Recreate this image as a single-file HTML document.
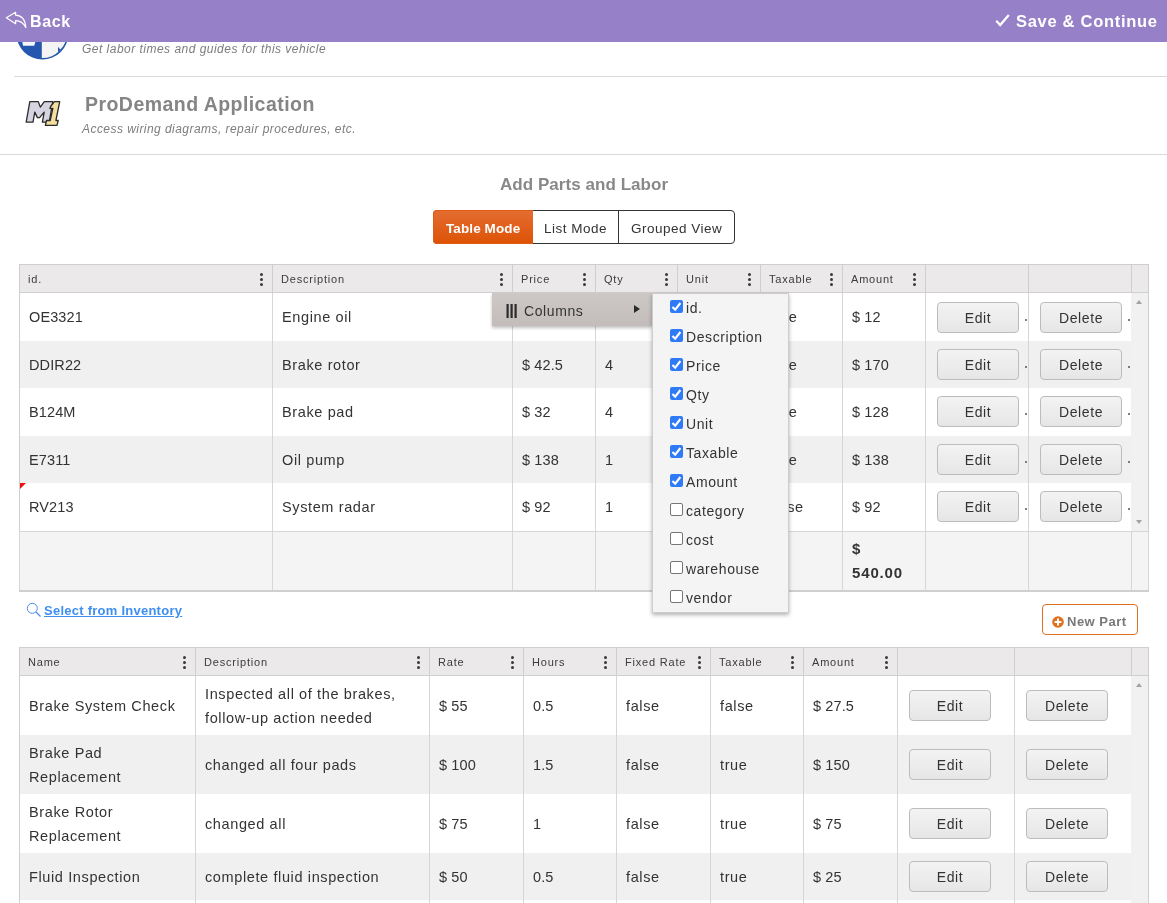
<!DOCTYPE html><html><head><meta charset="utf-8"><title>Parts and Labor</title><style>
*{box-sizing:border-box;margin:0;padding:0}
html,body{width:1167px;height:903px;overflow:hidden;background:#fff;font-family:"Liberation Sans", sans-serif;color:#333}
.a{position:absolute}
.t{position:absolute;white-space:nowrap;will-change:transform}
.hdr{position:absolute;left:0;top:0;width:1167px;height:41.5px;background:#9680c7;z-index:50}
.cell{will-change:transform;position:absolute;display:flex;align-items:center;overflow:hidden;white-space:nowrap}
.hcell{font-size:11px;letter-spacing:0.8px;color:#3c3c3c}
.bcell{font-size:14.5px;letter-spacing:0.7px;color:#333;line-height:24px}
.vl{position:absolute;width:1px;background:#d6d6d6}
.hl{position:absolute;height:1px;background:#d2d2d2}
.dots{position:absolute;width:3px}
.dots i{display:block;width:3px;height:3px;border-radius:50%;background:#3a3a3a;margin-bottom:2.2px}
.btn{will-change:transform;position:absolute;width:82px;height:31px;padding-top:1px;border:1px solid #bcbcbc;border-radius:4px;background:linear-gradient(#f3f3f3,#e6e6e6);font-size:14px;letter-spacing:0.6px;color:#333;display:flex;align-items:center;justify-content:center}
.cb{position:absolute;width:13px;height:13px;border-radius:2px}
.cb.on{background:#2f7bf7}
.cb.off{background:#fff;border:1px solid #767676}
.mi{will-change:transform;position:absolute;font-size:14px;letter-spacing:0.6px;color:#333;white-space:nowrap}
</style></head><body>
<svg class="a" style="left:16px;top:7px" width="53" height="53" viewBox="0 0 53 53">
<defs><clipPath id="gc"><circle cx="26.4" cy="26.6" r="24.4"/></clipPath></defs>
<circle cx="26.4" cy="26.6" r="26" fill="#2457ad"/>
<g clip-path="url(#gc)">
<rect x="25.8" y="0" width="30" height="60" fill="#f4f4f4"/>
<path d="M5.5 30 H21 L18.2 38.8 H7 Z" fill="#f7f7f7"/>
<path d="M42 39.8 L44.2 42.6 L47.5 39 L53 39 L53 60 L42 60 Z" fill="#2457ad"/>
</g>
</svg>
<div class="t" style="left:82px;top:42px;font-size:12px;font-style:italic;color:#7d7d7d;letter-spacing:0.48px">Get labor times and guides for this vehicle</div>
<div class="a" style="left:14px;top:76px;width:1153px;height:1px;background:#d9d9d9"></div>
<svg class="a" style="left:22px;top:96px" width="42" height="34" viewBox="0 0 42 34">
<path d="M4.2 26.2 L7.8 5.6 L16.3 5.6 L18.3 11.1 L22.3 5.6 L30.8 5.6 L27.2 26.2 L20.4 26.2 L22.2 16.1 L17.6 21.6 L15.4 21.6 L12.8 16.1 L11.0 26.2 Z" fill="#d6d4e0" stroke="#2b2b2b" stroke-width="1.3" stroke-linejoin="round"/>
<path d="M28.6 10.5 L32.4 5.6 L37.7 5.6 L33.9 24.5 L36.2 24.5 L35 29.4 L23.4 29.4 L24.5 24.5 L28.2 24.5 L30.9 12.4 L27.9 12.4 Z" fill="#f4df9e" stroke="#2b2b2b" stroke-width="1.3" stroke-linejoin="round"/>
</svg>
<div class="t" style="left:85px;top:92.5px;font-size:19.5px;font-weight:bold;color:#858585;letter-spacing:0.45px">ProDemand Application</div>
<div class="t" style="left:82px;top:122px;font-size:12px;font-style:italic;color:#7d7d7d;letter-spacing:0.45px">Access wiring diagrams, repair procedures, etc.</div>
<div class="a" style="left:0;top:154px;width:1167px;height:1px;background:#d9d9d9"></div>
<div class="t" style="left:500px;top:175px;font-size:17px;font-weight:bold;color:#888;letter-spacing:0.05px">Add Parts and Labor</div>
<div class="a" style="left:433px;top:210px;width:302px;height:34px;border:1px solid #333;border-radius:4px;background:#fff"></div>
<div class="a" style="left:433px;top:210px;width:100px;height:34px;border-radius:4px 0 0 4px;z-index:2;border:1px solid #e15a12;border-right:0;background:linear-gradient(#e46c31,#dd5306);"></div>
<div class="a" style="left:618px;top:210px;width:1px;height:34px;background:#333"></div>
<div class="t" style="left:446px;top:221px;font-size:13.5px;font-weight:bold;color:#fff;letter-spacing:0.1px;z-index:3">Table Mode</div>
<div class="t" style="left:544px;top:221px;font-size:13.5px;color:#333;letter-spacing:0.5px">List Mode</div>
<div class="t" style="left:631px;top:221px;font-size:13.5px;color:#333;letter-spacing:0.5px">Grouped View</div>
<div class="a" style="left:19px;top:264px;width:1130px;height:29px;background:#ebe9ea;border:1px solid #cfcfcf"></div>
<div class="vl" style="left:272px;top:264px;height:29px;background:#cfcfcf"></div>
<div class="vl" style="left:512px;top:264px;height:29px;background:#cfcfcf"></div>
<div class="vl" style="left:595px;top:264px;height:29px;background:#cfcfcf"></div>
<div class="vl" style="left:677px;top:264px;height:29px;background:#cfcfcf"></div>
<div class="vl" style="left:760px;top:264px;height:29px;background:#cfcfcf"></div>
<div class="vl" style="left:842px;top:264px;height:29px;background:#cfcfcf"></div>
<div class="vl" style="left:925px;top:264px;height:29px;background:#cfcfcf"></div>
<div class="vl" style="left:1028px;top:264px;height:29px;background:#cfcfcf"></div>
<div class="vl" style="left:1131px;top:264px;height:29px;background:#cfcfcf"></div>
<div class="cell hcell" style="left:27.5px;top:265px;width:229px;height:27px">id.</div>
<div class="dots" style="left:259.7px;top:273px"><i></i><i></i><i></i></div>
<div class="cell hcell" style="left:280.5px;top:265px;width:216px;height:27px">Description</div>
<div class="dots" style="left:499.7px;top:273px"><i></i><i></i><i></i></div>
<div class="cell hcell" style="left:520.5px;top:265px;width:59px;height:27px">Price</div>
<div class="dots" style="left:582.7px;top:273px"><i></i><i></i><i></i></div>
<div class="cell hcell" style="left:603.5px;top:265px;width:58px;height:27px">Qty</div>
<div class="dots" style="left:664.7px;top:273px"><i></i><i></i><i></i></div>
<div class="cell hcell" style="left:685.5px;top:265px;width:59px;height:27px">Unit</div>
<div class="dots" style="left:747.7px;top:273px"><i></i><i></i><i></i></div>
<div class="cell hcell" style="left:768.5px;top:265px;width:58px;height:27px">Taxable</div>
<div class="dots" style="left:829.7px;top:273px"><i></i><i></i><i></i></div>
<div class="cell hcell" style="left:850.5px;top:265px;width:59px;height:27px">Amount</div>
<div class="dots" style="left:912.7px;top:273px"><i></i><i></i><i></i></div>
<div class="a" style="left:20px;top:293px;width:1111px;height:48px;background:#fff"></div>
<div class="a" style="left:20px;top:341px;width:1111px;height:47px;background:#f0f0f0"></div>
<div class="a" style="left:20px;top:388px;width:1111px;height:48px;background:#fff"></div>
<div class="a" style="left:20px;top:436px;width:1111px;height:47px;background:#f0f0f0"></div>
<div class="a" style="left:20px;top:483px;width:1111px;height:48px;background:#fff"></div>
<div class="a" style="left:1131px;top:293px;width:17px;height:238px;background:#f1f1f1"></div>
<div class="vl" style="left:19px;top:293px;height:298px;background:#cfcfcf"></div>
<div class="vl" style="left:1148px;top:293px;height:298px;background:#cfcfcf"></div>
<div class="vl" style="left:272px;top:293px;height:298px"></div>
<div class="vl" style="left:512px;top:293px;height:298px"></div>
<div class="vl" style="left:595px;top:293px;height:298px"></div>
<div class="vl" style="left:677px;top:293px;height:298px"></div>
<div class="vl" style="left:760px;top:293px;height:298px"></div>
<div class="vl" style="left:842px;top:293px;height:298px"></div>
<div class="vl" style="left:925px;top:293px;height:298px"></div>
<div class="vl" style="left:1028px;top:293px;height:298px"></div>
<div class="a" style="left:1136px;top:300px;width:0;height:0;border-left:3.5px solid transparent;border-right:3.5px solid transparent;border-bottom:4px solid #a3a3a3"></div>
<div class="cell bcell" style="left:29px;top:293px;width:241px;height:48px;white-space:normal;letter-spacing:0.12px">OE3321</div>
<div class="cell bcell" style="left:282px;top:293px;width:228px;height:48px;white-space:normal;letter-spacing:0.62px">Engine oil</div>
<div class="cell bcell" style="left:522px;top:293px;width:71px;height:48px;white-space:normal;letter-spacing:0.12px">$ 12</div>
<div class="cell bcell" style="left:605px;top:293px;width:70px;height:48px;white-space:normal;letter-spacing:0.12px">1</div>
<div class="cell bcell" style="left:687px;top:293px;width:71px;height:48px;white-space:normal;letter-spacing:0.62px">qt</div>
<div class="cell bcell" style="left:770px;top:293px;width:70px;height:48px;white-space:normal;letter-spacing:0.62px">true</div>
<div class="cell bcell" style="left:852px;top:293px;width:71px;height:48px;white-space:normal;letter-spacing:0.12px">$ 12</div>
<div class="btn" style="left:937px;top:302px">Edit</div>
<div class="a" style="left:1024.5px;top:319px;width:2px;height:2px;border-radius:1px;background:#555"></div>
<div class="btn" style="left:1040px;top:302px">Delete</div>
<div class="a" style="left:1127.5px;top:319px;width:2px;height:2px;border-radius:1px;background:#555"></div>
<div class="cell bcell" style="left:29px;top:341px;width:241px;height:47px;white-space:normal;letter-spacing:0.12px">DDIR22</div>
<div class="cell bcell" style="left:282px;top:341px;width:228px;height:47px;white-space:normal;letter-spacing:0.62px">Brake rotor</div>
<div class="cell bcell" style="left:522px;top:341px;width:71px;height:47px;white-space:normal;letter-spacing:0.12px">$ 42.5</div>
<div class="cell bcell" style="left:605px;top:341px;width:70px;height:47px;white-space:normal;letter-spacing:0.12px">4</div>
<div class="cell bcell" style="left:687px;top:341px;width:71px;height:47px;white-space:normal;letter-spacing:0.62px">ea</div>
<div class="cell bcell" style="left:770px;top:341px;width:70px;height:47px;white-space:normal;letter-spacing:0.62px">true</div>
<div class="cell bcell" style="left:852px;top:341px;width:71px;height:47px;white-space:normal;letter-spacing:0.12px">$ 170</div>
<div class="btn" style="left:937px;top:349px">Edit</div>
<div class="a" style="left:1024.5px;top:366px;width:2px;height:2px;border-radius:1px;background:#555"></div>
<div class="btn" style="left:1040px;top:349px">Delete</div>
<div class="a" style="left:1127.5px;top:366px;width:2px;height:2px;border-radius:1px;background:#555"></div>
<div class="cell bcell" style="left:29px;top:388px;width:241px;height:48px;white-space:normal;letter-spacing:0.12px">B124M</div>
<div class="cell bcell" style="left:282px;top:388px;width:228px;height:48px;white-space:normal;letter-spacing:0.62px">Brake pad</div>
<div class="cell bcell" style="left:522px;top:388px;width:71px;height:48px;white-space:normal;letter-spacing:0.12px">$ 32</div>
<div class="cell bcell" style="left:605px;top:388px;width:70px;height:48px;white-space:normal;letter-spacing:0.12px">4</div>
<div class="cell bcell" style="left:687px;top:388px;width:71px;height:48px;white-space:normal;letter-spacing:0.62px">ea</div>
<div class="cell bcell" style="left:770px;top:388px;width:70px;height:48px;white-space:normal;letter-spacing:0.62px">true</div>
<div class="cell bcell" style="left:852px;top:388px;width:71px;height:48px;white-space:normal;letter-spacing:0.12px">$ 128</div>
<div class="btn" style="left:937px;top:396px">Edit</div>
<div class="a" style="left:1024.5px;top:413px;width:2px;height:2px;border-radius:1px;background:#555"></div>
<div class="btn" style="left:1040px;top:396px">Delete</div>
<div class="a" style="left:1127.5px;top:413px;width:2px;height:2px;border-radius:1px;background:#555"></div>
<div class="cell bcell" style="left:29px;top:436px;width:241px;height:47px;white-space:normal;letter-spacing:0.12px">E7311</div>
<div class="cell bcell" style="left:282px;top:436px;width:228px;height:47px;white-space:normal;letter-spacing:0.62px">Oil pump</div>
<div class="cell bcell" style="left:522px;top:436px;width:71px;height:47px;white-space:normal;letter-spacing:0.12px">$ 138</div>
<div class="cell bcell" style="left:605px;top:436px;width:70px;height:47px;white-space:normal;letter-spacing:0.12px">1</div>
<div class="cell bcell" style="left:687px;top:436px;width:71px;height:47px;white-space:normal;letter-spacing:0.62px">ea</div>
<div class="cell bcell" style="left:770px;top:436px;width:70px;height:47px;white-space:normal;letter-spacing:0.62px">true</div>
<div class="cell bcell" style="left:852px;top:436px;width:71px;height:47px;white-space:normal;letter-spacing:0.12px">$ 138</div>
<div class="btn" style="left:937px;top:444px">Edit</div>
<div class="a" style="left:1024.5px;top:461px;width:2px;height:2px;border-radius:1px;background:#555"></div>
<div class="btn" style="left:1040px;top:444px">Delete</div>
<div class="a" style="left:1127.5px;top:461px;width:2px;height:2px;border-radius:1px;background:#555"></div>
<div class="cell bcell" style="left:29px;top:483px;width:241px;height:48px;white-space:normal;letter-spacing:0.12px">RV213</div>
<div class="cell bcell" style="left:282px;top:483px;width:228px;height:48px;white-space:normal;letter-spacing:0.62px">System radar</div>
<div class="cell bcell" style="left:522px;top:483px;width:71px;height:48px;white-space:normal;letter-spacing:0.12px">$ 92</div>
<div class="cell bcell" style="left:605px;top:483px;width:70px;height:48px;white-space:normal;letter-spacing:0.12px">1</div>
<div class="cell bcell" style="left:687px;top:483px;width:71px;height:48px;white-space:normal;letter-spacing:0.62px">ea</div>
<div class="cell bcell" style="left:770px;top:483px;width:70px;height:48px;white-space:normal;letter-spacing:0.62px">false</div>
<div class="cell bcell" style="left:852px;top:483px;width:71px;height:48px;white-space:normal;letter-spacing:0.12px">$ 92</div>
<div class="btn" style="left:937px;top:491px">Edit</div>
<div class="a" style="left:1024.5px;top:508px;width:2px;height:2px;border-radius:1px;background:#555"></div>
<div class="btn" style="left:1040px;top:491px">Delete</div>
<div class="a" style="left:1127.5px;top:508px;width:2px;height:2px;border-radius:1px;background:#555"></div>
<div class="a" style="left:20px;top:531px;width:1128px;height:60px;background:#f4f4f4"></div>
<div class="a" style="left:19px;top:531px;width:1130px;height:1px;background:#d6d6d6"></div>
<div class="vl" style="left:19px;top:531px;height:60px;background:#d6d6d6"></div>
<div class="vl" style="left:272px;top:531px;height:60px;background:#d6d6d6"></div>
<div class="vl" style="left:512px;top:531px;height:60px;background:#d6d6d6"></div>
<div class="vl" style="left:595px;top:531px;height:60px;background:#d6d6d6"></div>
<div class="vl" style="left:677px;top:531px;height:60px;background:#d6d6d6"></div>
<div class="vl" style="left:760px;top:531px;height:60px;background:#d6d6d6"></div>
<div class="vl" style="left:842px;top:531px;height:60px;background:#d6d6d6"></div>
<div class="vl" style="left:925px;top:531px;height:60px;background:#d6d6d6"></div>
<div class="vl" style="left:1028px;top:531px;height:60px;background:#d6d6d6"></div>
<div class="vl" style="left:1131px;top:531px;height:60px;background:#d6d6d6"></div>
<div class="vl" style="left:1148px;top:531px;height:60px;background:#d6d6d6"></div>
<div class="a" style="left:19px;top:590px;width:1130px;height:2px;background:#cfcfcf"></div>
<div class="t" style="left:852px;top:537px;font-size:15px;font-weight:bold;line-height:24px;color:#333;letter-spacing:0.85px">$<br>540.00</div>
<div class="a" style="left:1136px;top:520px;width:0;height:0;border-left:3.5px solid transparent;border-right:3.5px solid transparent;border-top:4px solid #a3a3a3"></div>
<div class="a" style="left:20px;top:483px;width:0;height:0;border-top:6px solid #e11;border-right:6px solid transparent"></div>
<svg class="a" style="left:26px;top:602px" width="16" height="16" viewBox="0 0 16 16"><circle cx="6.3" cy="6.3" r="5" fill="none" stroke="#4a90e8" stroke-width="1"/><path d="M10 10 L14.5 14.5" stroke="#4a90e8" stroke-width="1.2"/></svg>
<div class="t" style="left:44px;top:603px;font-size:13px;font-weight:bold;color:#3f8ff0;letter-spacing:0.25px;text-decoration:underline">Select from Inventory</div>
<div class="a" style="left:1042px;top:604px;width:96px;height:31px;border:1px solid #e0701e;border-radius:4px;background:#fff"></div>
<svg class="a" style="left:1051.5px;top:615.5px" width="12" height="12" viewBox="0 0 12 12"><circle cx="6" cy="6" r="5.8" fill="#e0701e"/><path d="M6 2.6 V9.4 M2.6 6 H9.4" stroke="#fff" stroke-width="2"/></svg>
<div class="t" style="left:1067px;top:614px;font-size:13px;font-weight:bold;color:#787878;letter-spacing:0.5px">New Part</div>
<div class="a" style="left:19px;top:647px;width:1130px;height:29px;background:#ebe9ea;border:1px solid #cfcfcf"></div>
<div class="vl" style="left:195px;top:647px;height:29px;background:#cfcfcf"></div>
<div class="vl" style="left:429px;top:647px;height:29px;background:#cfcfcf"></div>
<div class="vl" style="left:523px;top:647px;height:29px;background:#cfcfcf"></div>
<div class="vl" style="left:616px;top:647px;height:29px;background:#cfcfcf"></div>
<div class="vl" style="left:710px;top:647px;height:29px;background:#cfcfcf"></div>
<div class="vl" style="left:803px;top:647px;height:29px;background:#cfcfcf"></div>
<div class="vl" style="left:897px;top:647px;height:29px;background:#cfcfcf"></div>
<div class="vl" style="left:1014px;top:647px;height:29px;background:#cfcfcf"></div>
<div class="vl" style="left:1131px;top:647px;height:29px;background:#cfcfcf"></div>
<div class="cell hcell" style="left:27.5px;top:648px;width:152px;height:27px">Name</div>
<div class="dots" style="left:182.7px;top:656px"><i></i><i></i><i></i></div>
<div class="cell hcell" style="left:203.5px;top:648px;width:210px;height:27px">Description</div>
<div class="dots" style="left:416.7px;top:656px"><i></i><i></i><i></i></div>
<div class="cell hcell" style="left:437.5px;top:648px;width:70px;height:27px">Rate</div>
<div class="dots" style="left:510.7px;top:656px"><i></i><i></i><i></i></div>
<div class="cell hcell" style="left:531.5px;top:648px;width:69px;height:27px">Hours</div>
<div class="dots" style="left:603.7px;top:656px"><i></i><i></i><i></i></div>
<div class="cell hcell" style="left:624.5px;top:648px;width:70px;height:27px">Fixed Rate</div>
<div class="dots" style="left:697.7px;top:656px"><i></i><i></i><i></i></div>
<div class="cell hcell" style="left:718.5px;top:648px;width:69px;height:27px">Taxable</div>
<div class="dots" style="left:790.7px;top:656px"><i></i><i></i><i></i></div>
<div class="cell hcell" style="left:811.5px;top:648px;width:70px;height:27px">Amount</div>
<div class="dots" style="left:884.7px;top:656px"><i></i><i></i><i></i></div>
<div class="a" style="left:20px;top:676px;width:1111px;height:59px;background:#fff"></div>
<div class="a" style="left:20px;top:735px;width:1111px;height:59px;background:#f0f0f0"></div>
<div class="a" style="left:20px;top:794px;width:1111px;height:59px;background:#fff"></div>
<div class="a" style="left:20px;top:853px;width:1111px;height:47px;background:#f0f0f0"></div>
<div class="a" style="left:20px;top:900px;width:1111px;height:47px;background:#fff"></div>
<div class="a" style="left:1131px;top:676px;width:17px;height:271px;background:#f1f1f1"></div>
<div class="vl" style="left:19px;top:676px;height:271px;background:#cfcfcf"></div>
<div class="vl" style="left:1148px;top:676px;height:271px;background:#cfcfcf"></div>
<div class="vl" style="left:195px;top:676px;height:271px"></div>
<div class="vl" style="left:429px;top:676px;height:271px"></div>
<div class="vl" style="left:523px;top:676px;height:271px"></div>
<div class="vl" style="left:616px;top:676px;height:271px"></div>
<div class="vl" style="left:710px;top:676px;height:271px"></div>
<div class="vl" style="left:803px;top:676px;height:271px"></div>
<div class="vl" style="left:897px;top:676px;height:271px"></div>
<div class="vl" style="left:1014px;top:676px;height:271px"></div>
<div class="a" style="left:1136px;top:683px;width:0;height:0;border-left:3.5px solid transparent;border-right:3.5px solid transparent;border-bottom:4px solid #a3a3a3"></div>
<div class="cell bcell" style="left:29px;top:676px;width:164px;height:59px;white-space:normal;letter-spacing:0.62px">Brake System Check</div>
<div class="cell bcell" style="left:205px;top:676px;width:222px;height:59px;white-space:normal;letter-spacing:0.62px">Inspected all of the brakes, follow-up action needed</div>
<div class="cell bcell" style="left:439px;top:676px;width:82px;height:59px;white-space:normal;letter-spacing:0.12px">$ 55</div>
<div class="cell bcell" style="left:533px;top:676px;width:81px;height:59px;white-space:normal;letter-spacing:0.12px">0.5</div>
<div class="cell bcell" style="left:626px;top:676px;width:82px;height:59px;white-space:normal;letter-spacing:0.62px">false</div>
<div class="cell bcell" style="left:720px;top:676px;width:81px;height:59px;white-space:normal;letter-spacing:0.62px">false</div>
<div class="cell bcell" style="left:813px;top:676px;width:82px;height:59px;white-space:normal;letter-spacing:0.12px">$ 27.5</div>
<div class="btn" style="left:909px;top:690px">Edit</div>
<div class="btn" style="left:1026px;top:690px">Delete</div>
<div class="cell bcell" style="left:29px;top:735px;width:164px;height:59px;white-space:normal;letter-spacing:0.62px">Brake Pad Replacement</div>
<div class="cell bcell" style="left:205px;top:735px;width:222px;height:59px;white-space:normal;letter-spacing:0.62px">changed all four pads</div>
<div class="cell bcell" style="left:439px;top:735px;width:82px;height:59px;white-space:normal;letter-spacing:0.12px">$ 100</div>
<div class="cell bcell" style="left:533px;top:735px;width:81px;height:59px;white-space:normal;letter-spacing:0.12px">1.5</div>
<div class="cell bcell" style="left:626px;top:735px;width:82px;height:59px;white-space:normal;letter-spacing:0.62px">false</div>
<div class="cell bcell" style="left:720px;top:735px;width:81px;height:59px;white-space:normal;letter-spacing:0.62px">true</div>
<div class="cell bcell" style="left:813px;top:735px;width:82px;height:59px;white-space:normal;letter-spacing:0.12px">$ 150</div>
<div class="btn" style="left:909px;top:749px">Edit</div>
<div class="btn" style="left:1026px;top:749px">Delete</div>
<div class="cell bcell" style="left:29px;top:794px;width:164px;height:59px;white-space:normal;letter-spacing:0.62px">Brake Rotor Replacement</div>
<div class="cell bcell" style="left:205px;top:794px;width:222px;height:59px;white-space:normal;letter-spacing:0.62px">changed all</div>
<div class="cell bcell" style="left:439px;top:794px;width:82px;height:59px;white-space:normal;letter-spacing:0.12px">$ 75</div>
<div class="cell bcell" style="left:533px;top:794px;width:81px;height:59px;white-space:normal;letter-spacing:0.12px">1</div>
<div class="cell bcell" style="left:626px;top:794px;width:82px;height:59px;white-space:normal;letter-spacing:0.62px">false</div>
<div class="cell bcell" style="left:720px;top:794px;width:81px;height:59px;white-space:normal;letter-spacing:0.62px">true</div>
<div class="cell bcell" style="left:813px;top:794px;width:82px;height:59px;white-space:normal;letter-spacing:0.12px">$ 75</div>
<div class="btn" style="left:909px;top:808px">Edit</div>
<div class="btn" style="left:1026px;top:808px">Delete</div>
<div class="cell bcell" style="left:29px;top:853px;width:164px;height:47px;white-space:normal;letter-spacing:0.62px">Fluid Inspection</div>
<div class="cell bcell" style="left:205px;top:853px;width:222px;height:47px;white-space:normal;letter-spacing:0.62px">complete fluid inspection</div>
<div class="cell bcell" style="left:439px;top:853px;width:82px;height:47px;white-space:normal;letter-spacing:0.12px">$ 50</div>
<div class="cell bcell" style="left:533px;top:853px;width:81px;height:47px;white-space:normal;letter-spacing:0.12px">0.5</div>
<div class="cell bcell" style="left:626px;top:853px;width:82px;height:47px;white-space:normal;letter-spacing:0.62px">false</div>
<div class="cell bcell" style="left:720px;top:853px;width:81px;height:47px;white-space:normal;letter-spacing:0.62px">true</div>
<div class="cell bcell" style="left:813px;top:853px;width:82px;height:47px;white-space:normal;letter-spacing:0.12px">$ 25</div>
<div class="btn" style="left:909px;top:861px">Edit</div>
<div class="btn" style="left:1026px;top:861px">Delete</div>
<div class="cell bcell" style="left:29px;top:900px;width:164px;height:47px;white-space:normal;letter-spacing:0.62px">Tire Rotation</div>
<div class="cell bcell" style="left:205px;top:900px;width:222px;height:47px;white-space:normal;letter-spacing:0.62px">rotated tires</div>
<div class="cell bcell" style="left:439px;top:900px;width:82px;height:47px;white-space:normal;letter-spacing:0.12px">$ 40</div>
<div class="cell bcell" style="left:533px;top:900px;width:81px;height:47px;white-space:normal;letter-spacing:0.12px">0.5</div>
<div class="cell bcell" style="left:626px;top:900px;width:82px;height:47px;white-space:normal;letter-spacing:0.62px">false</div>
<div class="cell bcell" style="left:720px;top:900px;width:81px;height:47px;white-space:normal;letter-spacing:0.62px">true</div>
<div class="cell bcell" style="left:813px;top:900px;width:82px;height:47px;white-space:normal;letter-spacing:0.12px">$ 20</div>
<div class="btn" style="left:909px;top:908px">Edit</div>
<div class="btn" style="left:1026px;top:908px">Delete</div>
<div class="a" style="left:492px;top:293px;width:160px;height:33px;background:linear-gradient(#cdc8c5,#c2bdba);box-shadow:0 2px 3px rgba(0,0,0,0.25);z-index:20"></div>
<svg class="a" style="left:506px;top:304px;z-index:21" width="12" height="14" viewBox="0 0 12 14"><rect x="0.5" y="0" width="2.2" height="14" fill="#2b2b2b"/><rect x="4.5" y="0" width="2.2" height="14" fill="#2b2b2b"/><rect x="8.5" y="0" width="2.2" height="14" fill="#2b2b2b"/></svg>
<div class="mi" style="left:524px;top:303px;z-index:21">Columns</div>
<div class="a" style="left:634px;top:305px;width:0;height:0;border-top:4px solid transparent;border-bottom:4px solid transparent;border-left:6px solid #2b2b2b;z-index:21"></div>
<div class="a" style="left:652px;top:293px;width:137px;height:320px;background:#f4f4f4;border:1px solid #cdcdcd;box-shadow:0 2px 4px rgba(0,0,0,0.3);z-index:20"></div>
<div class="cb on" style="left:670px;top:300px;z-index:21"><svg width="13" height="13" viewBox="0 0 13 13" style="display:block"><path d="M2.4 7.0 L5.2 9.6 L10.4 3.0" fill="none" stroke="#fff" stroke-width="2.1"/></svg></div>
<div class="mi" style="left:686px;top:300px;z-index:21">id.</div>
<div class="cb on" style="left:670px;top:329px;z-index:21"><svg width="13" height="13" viewBox="0 0 13 13" style="display:block"><path d="M2.4 7.0 L5.2 9.6 L10.4 3.0" fill="none" stroke="#fff" stroke-width="2.1"/></svg></div>
<div class="mi" style="left:686px;top:329px;z-index:21">Description</div>
<div class="cb on" style="left:670px;top:358px;z-index:21"><svg width="13" height="13" viewBox="0 0 13 13" style="display:block"><path d="M2.4 7.0 L5.2 9.6 L10.4 3.0" fill="none" stroke="#fff" stroke-width="2.1"/></svg></div>
<div class="mi" style="left:686px;top:358px;z-index:21">Price</div>
<div class="cb on" style="left:670px;top:387px;z-index:21"><svg width="13" height="13" viewBox="0 0 13 13" style="display:block"><path d="M2.4 7.0 L5.2 9.6 L10.4 3.0" fill="none" stroke="#fff" stroke-width="2.1"/></svg></div>
<div class="mi" style="left:686px;top:387px;z-index:21">Qty</div>
<div class="cb on" style="left:670px;top:416px;z-index:21"><svg width="13" height="13" viewBox="0 0 13 13" style="display:block"><path d="M2.4 7.0 L5.2 9.6 L10.4 3.0" fill="none" stroke="#fff" stroke-width="2.1"/></svg></div>
<div class="mi" style="left:686px;top:416px;z-index:21">Unit</div>
<div class="cb on" style="left:670px;top:445px;z-index:21"><svg width="13" height="13" viewBox="0 0 13 13" style="display:block"><path d="M2.4 7.0 L5.2 9.6 L10.4 3.0" fill="none" stroke="#fff" stroke-width="2.1"/></svg></div>
<div class="mi" style="left:686px;top:445px;z-index:21">Taxable</div>
<div class="cb on" style="left:670px;top:474px;z-index:21"><svg width="13" height="13" viewBox="0 0 13 13" style="display:block"><path d="M2.4 7.0 L5.2 9.6 L10.4 3.0" fill="none" stroke="#fff" stroke-width="2.1"/></svg></div>
<div class="mi" style="left:686px;top:474px;z-index:21">Amount</div>
<div class="cb off" style="left:670px;top:503px;z-index:21"></div>
<div class="mi" style="left:686px;top:503px;z-index:21">category</div>
<div class="cb off" style="left:670px;top:532px;z-index:21"></div>
<div class="mi" style="left:686px;top:532px;z-index:21">cost</div>
<div class="cb off" style="left:670px;top:561px;z-index:21"></div>
<div class="mi" style="left:686px;top:561px;z-index:21">warehouse</div>
<div class="cb off" style="left:670px;top:590px;z-index:21"></div>
<div class="mi" style="left:686px;top:590px;z-index:21">vendor</div>
<div class="hdr"></div>
<svg class="a" style="left:5px;top:11px;z-index:51" width="22" height="18" viewBox="0 0 22 18"><path d="M1.3 6.7 L10.6 1.2 L10.6 4.2 C15.5 4.4 20.2 7.5 20.8 16.6 C18.8 12.4 15 9.6 10.6 9.6 L10.6 12.7 Z" fill="none" stroke="#fff" stroke-width="1.2" stroke-linejoin="round"/></svg>
<div class="t" style="left:30px;top:13px;font-size:16px;font-weight:bold;color:#fff;letter-spacing:0.6px;z-index:51">Back</div>
<svg class="a" style="left:995px;top:14px;z-index:51" width="15" height="13" viewBox="0 0 15 13"><path d="M1.2 6.8 L5.2 11 L13.8 1" fill="none" stroke="#fff" stroke-width="2.2"/></svg>
<div class="t" style="left:1016px;top:11.5px;font-size:16.5px;font-weight:bold;color:#fff;letter-spacing:0.7px;z-index:51">Save &amp; Continue</div>
</body></html>
